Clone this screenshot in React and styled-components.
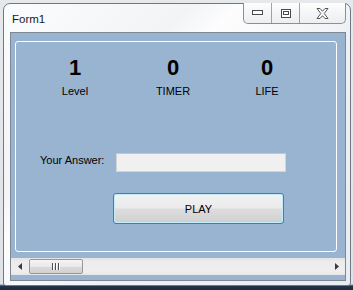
import React from 'react';
import styled, { createGlobalStyle } from 'styled-components';

const GlobalStyle = createGlobalStyle`
  html, body {
    margin: 0;
    padding: 0;
  }
  body {
    width: 353px;
    height: 290px;
    overflow: hidden;
    background: linear-gradient(#e6e9ec 0, #dfe3e7 284px, #22344a 286px, #1c2a3c 100%);
    font-family: "Liberation Sans", Arial, sans-serif;
  }
`;

const Window = styled.div`
  box-sizing: border-box;
  margin: 3px 0 0 3px;
  width: 348px;
  height: 283px;
  border: 1px solid #6f7884;
  border-radius: 7px 7px 3px 3px;
  background: linear-gradient(135deg, #fbfcfd 0%, #f2f4f6 30%, #fdfdfe 38%, #eef1f4 60%, #e9edf1 100%);
  display: flex;
  flex-direction: column;
`;

const TitleBar = styled.div`
  height: 28px;
  display: flex;
  align-items: center;
  padding-left: 8px;
`;

const Title = styled.span`
  font-family: "Liberation Sans", Arial, sans-serif;
  font-size: 11.5px;
  color: #1a1a1a;
  margin-top: 1px;
`;

const CaptionGroup = styled.div`
  display: flex;
  align-self: flex-start;
  margin: -1px 4px 0 auto;
  height: 20px;
  border: 1px solid #8b9097;
  border-top: none;
  border-radius: 0 0 5px 5px;
  background: linear-gradient(#fdfdfd, #eceef0);
  overflow: hidden;
`;

const CaptionButton = styled.div`
  box-sizing: border-box;
  width: ${(p) => p.$w}px;
  height: 100%;
  display: flex;
  align-items: center;
  justify-content: center;
  border-left: ${(p) => (p.$first ? 'none' : '1px solid #9ea3a9')};
`;

const Client = styled.div`
  box-sizing: border-box;
  margin: 0 4px 0 6px;
  height: 249px;
  border: 1px solid #7f8892;
  background: #99b4d1;
  display: flex;
  flex-direction: column;
`;

const Panel = styled.div`
  box-sizing: border-box;
  margin: 8px 0 0 4px;
  width: 322px;
  height: 211px;
  border: 1px solid #ffffff;
  border-radius: 3px;
`;

const Stats = styled.div`
  display: grid;
  grid-template-columns: 98px 98px 90px;
  padding: 15px 0 0 10px;
`;

const Stat = styled.div`
  display: flex;
  flex-direction: column;
  align-items: center;
`;

const StatValue = styled.div`
  font-family: "Liberation Sans", Arial, sans-serif;
  font-weight: bold;
  font-size: 22px;
  line-height: 22px;
  color: #000;
`;

const StatLabel = styled.div`
  margin-top: 6px;
  font-family: "Liberation Sans", Arial, sans-serif;
  font-size: 11px;
  line-height: 13px;
  color: #000;
`;

const AnswerRow = styled.div`
  display: flex;
  align-items: flex-start;
  margin-top: 55px;
  padding-left: 24px;
`;

const AnswerLabel = styled.label`
  width: 76px;
  font-size: 11px;
  line-height: 13px;
  color: #000;
  margin-top: 1px;
`;

const AnswerInput = styled.div`
  box-sizing: border-box;
  width: 170px;
  height: 19px;
  background: #f0f0f0;
  border: 1px solid #d2d4d6;
  border-top-color: #c4c6c9;
`;

const PlayButton = styled.div`
  box-sizing: border-box;
  margin: 21px 0 0 97px;
  width: 171px;
  height: 31px;
  border: 1px solid #3c7fb1;
  border-radius: 3px;
  box-shadow: inset 0 0 0 1px #c3ecfb;
  background: linear-gradient(#f2f2f2 0%, #ebebeb 48%, #dddddd 52%, #cfcfcf 100%);
  display: flex;
  align-items: center;
  justify-content: center;
  font-size: 11px;
  color: #000;
`;

const ScrollBar = styled.div`
  margin-top: 6px;
  height: 17px;
  display: flex;
  align-items: center;
  background: linear-gradient(#e3e3e3, #ececec 20%, #eeeeee 80%, #e6e6e6);
`;

const Arrow = styled.div`
  width: 17px;
  height: 17px;
  display: flex;
  align-items: center;
  justify-content: center;
`;

const Track = styled.div`
  flex: 1;
  height: 100%;
  display: flex;
  align-items: center;
`;

const Thumb = styled.div`
  box-sizing: border-box;
  margin-left: 1px;
  width: 54px;
  height: 15px;
  border: 1px solid #979797;
  border-radius: 2px;
  background: linear-gradient(#f4f4f4, #e9e9e9 50%, #d9d9d9 52%, #d2d2d2);
  display: flex;
  align-items: center;
  justify-content: center;
  gap: 1px;
`;

const Grip = styled.span`
  width: 1px;
  height: 7px;
  background: #505050;
  box-shadow: 1px 0 0 #ffffff;
  margin-right: 1px;
`;

const stats = [
  { value: '1', label: 'Level' },
  { value: '0', label: 'TIMER' },
  { value: '0', label: 'LIFE' },
];

const App = () => (
  <>
    <GlobalStyle />
    <Window>
      <TitleBar>
        <Title>Form1</Title>
        <CaptionGroup>
          <CaptionButton $w={27} $first>
            <svg width="11" height="6" viewBox="0 0 11 6">
              <rect x="0.5" y="0.5" width="10" height="4" fill="#fff" stroke="#4a4a4a" />
            </svg>
          </CaptionButton>
          <CaptionButton $w={28}>
            <svg width="10" height="9" viewBox="0 0 10 9">
              <rect x="0.5" y="0.5" width="9" height="8" fill="#fff" stroke="#4a4a4a" />
              <rect x="2.5" y="2.5" width="5" height="3" fill="none" stroke="#4a4a4a" />
            </svg>
          </CaptionButton>
          <CaptionButton $w={46}>
            <svg width="13" height="11" viewBox="0 0 13 11">
              <path
                d="M1 0.5 H4 L6.5 3.3 L9 0.5 H12 L8.2 5.5 L12 10.5 H9 L6.5 7.7 L4 10.5 H1 L4.8 5.5 Z"
                fill="#fff"
                stroke="#555"
                strokeWidth="1"
                strokeLinejoin="round"
              />
            </svg>
          </CaptionButton>
        </CaptionGroup>
      </TitleBar>
      <Client>
        <Panel>
          <Stats>
            {stats.map((s) => (
              <Stat key={s.label}>
                <StatValue>{s.value}</StatValue>
                <StatLabel>{s.label}</StatLabel>
              </Stat>
            ))}
          </Stats>
          <AnswerRow>
            <AnswerLabel>Your Answer:</AnswerLabel>
            <AnswerInput />
          </AnswerRow>
          <PlayButton>PLAY</PlayButton>
        </Panel>
        <ScrollBar>
          <Arrow>
            <svg width="4" height="7" viewBox="0 0 4 7">
              <path d="M4 0 L0 3.5 L4 7 Z" fill="#3a3a3a" />
            </svg>
          </Arrow>
          <Track>
            <Thumb>
              <Grip />
              <Grip />
              <Grip />
            </Thumb>
          </Track>
          <Arrow>
            <svg width="4" height="7" viewBox="0 0 4 7">
              <path d="M0 0 L4 3.5 L0 7 Z" fill="#3a3a3a" />
            </svg>
          </Arrow>
        </ScrollBar>
      </Client>
    </Window>
  </>
);

export default App;
